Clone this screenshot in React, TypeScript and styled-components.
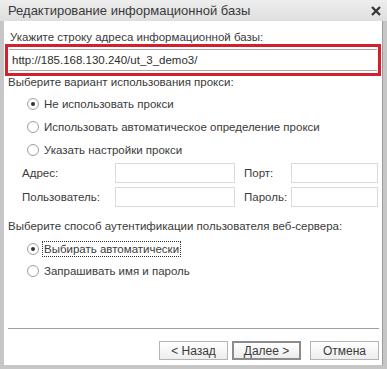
import React from 'react';
import styled, { createGlobalStyle } from 'styled-components';

const GlobalStyle = createGlobalStyle`
  html, body {
    margin: 0;
    padding: 0;
    background: #ffffff;
  }
  body {
    font-family: 'Liberation Sans', Arial, sans-serif;
  }
`;

const Window = styled.div`
  width: 387px;
  height: 369px;
  box-sizing: border-box;
  background: #c6c6c6;
  display: flex;
  flex-direction: column;
  padding: 0 4px 4px 4px;
`;

const TitleBar = styled.div`
  height: 21px;
  flex-shrink: 0;
  display: flex;
  align-items: center;
  justify-content: space-between;
  margin: 0 -4px;
  padding: 0 6px 0 8px;
  background: linear-gradient(#eeeeee, #dedede);
  color: #3a3a3a;
  font-size: 13px;
`;

const Close = styled.svg`
  width: 10px;
  height: 10px;
`;

const Body = styled.div`
  flex: 1;
  background: #ffffff;
  border-right: 1px solid #9c9c9c;
  display: flex;
  flex-direction: column;
  padding: 9px 0 0 0;
  color: #3a3a3a;
  font-size: 11.5px;
`;

const Label = styled.div<{ $indent?: number; $top?: number }>`
  line-height: 14px;
  padding-left: ${p => p.$indent ?? 4}px;
  margin-top: ${p => p.$top ?? 0}px;
`;

const Highlight = styled.div`
  margin: 0 1px 0 1px;
  border: 3px solid #d2202c;
  padding: 2px 1px;
`;

const UrlField = styled.div`
  height: 20px;
  border-top: 1px solid #a8a8a8;
  border-bottom: 1px solid #a8a8a8;
  display: flex;
  align-items: center;
  padding-left: 3px;
  color: #2e2e2e;
`;

const RadioRow = styled.div<{ $height: number }>`
  height: ${p => p.$height}px;
  display: flex;
  align-items: center;
  padding-left: 23px;
  gap: 3px;
`;

const Circle = styled.span<{ $on?: boolean }>`
  width: 10px;
  height: 10px;
  border-radius: 50%;
  border: 1px solid #a0a0a0;
  background: radial-gradient(circle, #ffffff 60%, #ececec);
  display: flex;
  align-items: center;
  justify-content: center;
  &::after {
    content: '';
    width: 4px;
    height: 4px;
    border-radius: 50%;
    background: ${p => (p.$on ? '#333333' : 'transparent')};
  }
`;

const RadioText = styled.span<{ $focus?: boolean }>`
  padding: 0 1px;
  border: 1px dotted ${p => (p.$focus ? '#333' : 'transparent')};
  line-height: 14px;
`;

const ProxyGrid = styled.div`
  display: grid;
  grid-template-columns: 93px 120px 56px 87px;
  row-gap: 4px;
  padding-left: 18px;
  margin-top: 2px;
  align-items: center;
`;

const GridLabel = styled.div<{ $pad?: number }>`
  padding-left: ${p => p.$pad ?? 0}px;
`;

const Input = styled.div`
  height: 20px;
  box-sizing: border-box;
  border: 1px solid #dadada;
`;

const Spacer = styled.div`
  flex: 1;
`;

const Separator = styled.div`
  height: 1px;
  background: #a0a0a0;
  margin: 0 3px 0 4px;
`;

const Footer = styled.div`
  display: flex;
  justify-content: flex-end;
  padding: 12px 3px 5px 0;
  gap: 4px;
`;

const Button = styled.div<{ $main?: boolean; $gapLeft?: number }>`
  width: 69px;
  height: 19px;
  box-sizing: border-box;
  margin-left: ${p => p.$gapLeft ?? 0}px;
  border: ${p => (p.$main ? '2px solid #8c8c8c' : '1px solid #b4b4b4')};
  background: linear-gradient(#ffffff, #ededed);
  display: flex;
  align-items: center;
  justify-content: center;
  font-size: 12px;
  color: #3a3a3a;
`;

export default function App() {
  return (
    <>
      <GlobalStyle />
      <Window>
        <TitleBar>
          <span>Редактирование информационной базы</span>
          <Close viewBox="0 0 10 10">
            <path d="M1 1 L9 9 M9 1 L1 9" stroke="#333" strokeWidth="2.2" />
          </Close>
        </TitleBar>
        <Body>
          <Label $indent={6}>Укажите строку адреса информационной базы:</Label>
          <Highlight>
            <UrlField>http://185.168.130.240/ut_3_demo3/</UrlField>
          </Highlight>
          <Label $top={-1}>Выберите вариант использования прокси:</Label>
          <RadioRow $height={23} style={{ marginTop: 3 }}>
            <Circle $on />
            <RadioText>Не использовать прокси</RadioText>
          </RadioRow>
          <RadioRow $height={23}>
            <Circle />
            <RadioText>Использовать автоматическое определение прокси</RadioText>
          </RadioRow>
          <RadioRow $height={23}>
            <Circle />
            <RadioText>Указать настройки прокси</RadioText>
          </RadioRow>
          <ProxyGrid>
            <GridLabel>Адрес:</GridLabel>
            <Input />
            <GridLabel $pad={9}>Порт:</GridLabel>
            <Input />
            <GridLabel>Пользователь:</GridLabel>
            <Input />
            <GridLabel $pad={9}>Пароль:</GridLabel>
            <Input />
          </ProxyGrid>
          <Label $top={12}>Выберите способ аутентификации пользователя веб-сервера:</Label>
          <RadioRow $height={22} style={{ marginTop: 5 }}>
            <Circle $on />
            <RadioText $focus>Выбирать автоматически</RadioText>
          </RadioRow>
          <RadioRow $height={22}>
            <Circle />
            <RadioText>Запрашивать имя и пароль</RadioText>
          </RadioRow>
          <Spacer />
          <Separator />
          <Footer>
            <Button>&lt; Назад</Button>
            <Button $main>Далее &gt;</Button>
            <Button $gapLeft={5}>Отмена</Button>
          </Footer>
        </Body>
      </Window>
    </>
  );
}
